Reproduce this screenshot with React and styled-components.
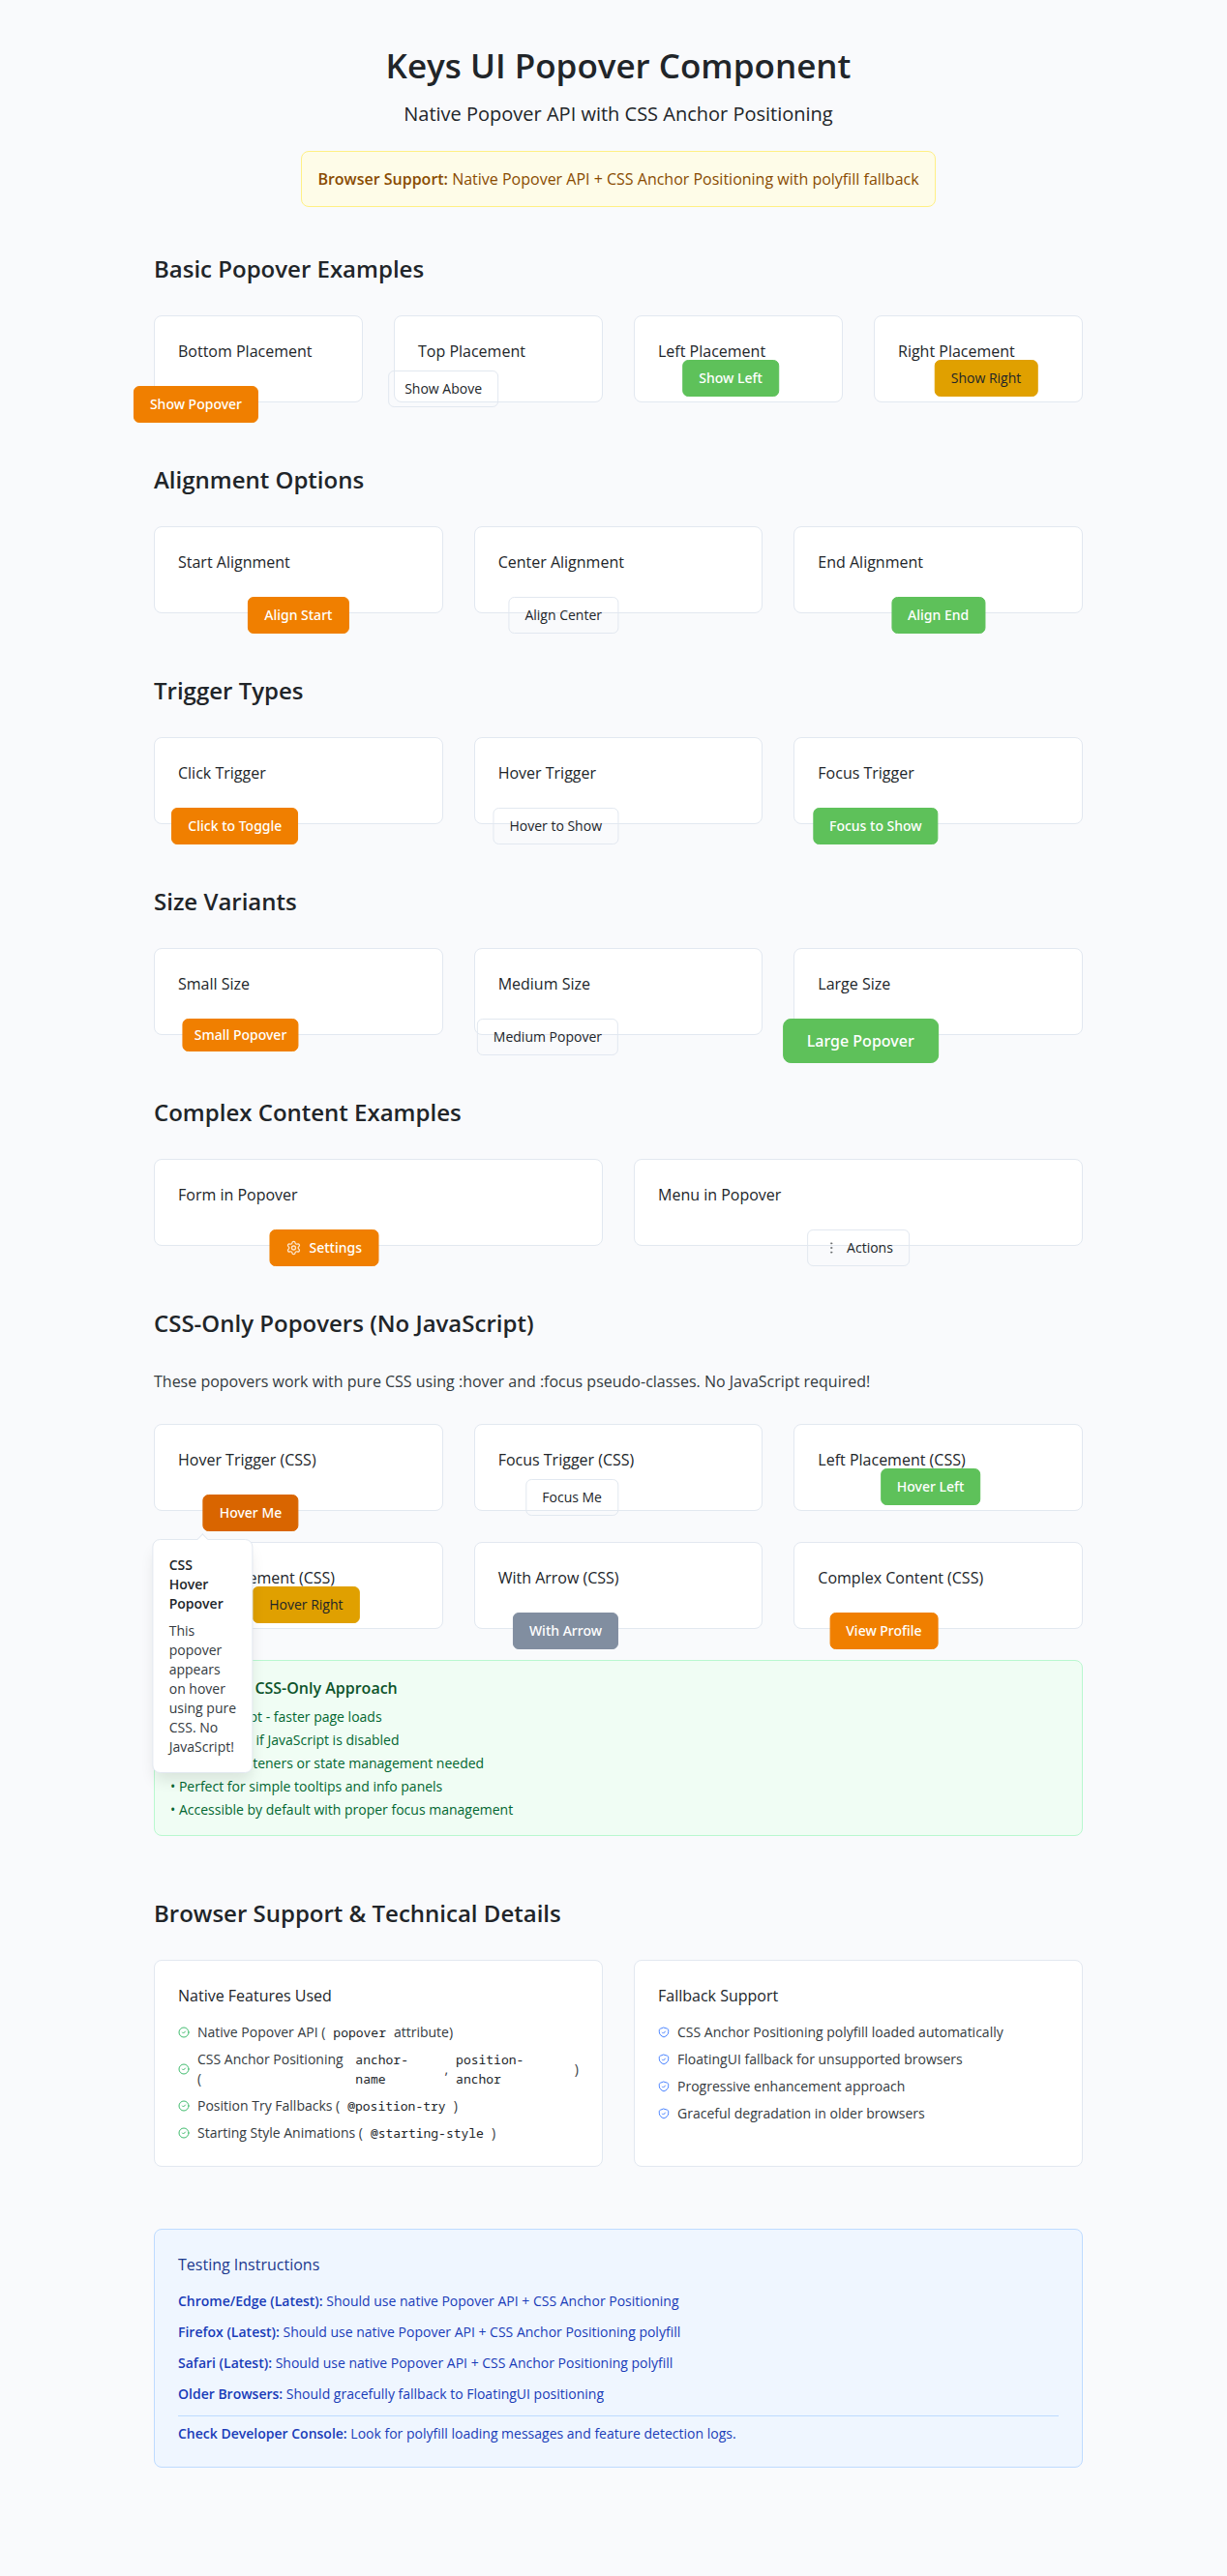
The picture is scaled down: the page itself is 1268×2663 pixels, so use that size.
import React from "react";
import styled, { createGlobalStyle, css } from "styled-components";
import { CircleCheck, EllipsisVertical, Settings } from "lucide-react";

const GlobalStyle = createGlobalStyle`
  *, *::before, *::after {
    box-sizing: border-box;
  }
  body {
    margin: 0;
    background: #f9fafc;
    color: #212529;
    font-family: "Open Sans", "Noto Sans", sans-serif;
    font-size: 16px;
    line-height: 24px;
  }
  h1, h2, h3, h4, p, ul {
    margin: 0;
    padding: 0;
  }
  ul {
    list-style: none;
  }
`;

const Page = styled.div`
  padding: 48px 0 112px 10px;
`;

const Container = styled.main`
  display: flex;
  flex-direction: column;
  width: 100%;
  max-width: 960px;
  margin: 0 auto;
`;

const Header = styled.header`
  display: flex;
  flex-direction: column;
  align-items: center;
  margin-bottom: 48px;
  text-align: center;
`;

const Title = styled.h1`
  font-size: 35px;
  font-weight: 600;
  line-height: 40px;
`;

const Subtitle = styled.p`
  margin-top: 16px;
  font-size: 20px;
  line-height: 28px;
`;

const Notice = styled.div`
  margin-top: 24px;
  padding: 16px;
  border: 1px solid #fff085;
  border-radius: 8px;
  background: #fefce8;
  color: #894b00;
`;

const Section = styled.section`
  display: flex;
  flex-direction: column;
  gap: 32px;
  margin-bottom: 64px;
`;

const SectionTitle = styled.h2`
  font-size: 24px;
  font-weight: 600;
  line-height: 32px;
`;

const Intro = styled.p`
  color: #343a40;
`;

const CardGrid = styled.div`
  display: grid;
  grid-template-columns: repeat(${(p) => p.$columns}, minmax(0, 1fr));
  gap: 32px;
`;

const Card = styled.article`
  position: relative;
  padding: 24px;
  border: 1px solid #e2e8f0;
  border-radius: 8px;
  background: #ffffff;
`;

const CardTitle = styled.h3`
  margin-bottom: 16px;
  font-size: 16px;
  font-weight: 500;
  line-height: 24px;
`;

const anchors = {
  bottom: "translateX(-100%)",
  center: "translateX(-50%)",
  top: "translate(-100%, -16px)",
  left: "translate(calc(-50% - 8px), calc(-50% - 8px))",
  right: "translate(calc(-50% + 8px), calc(-50% - 8px))",
};

const Anchor = styled.div`
  position: absolute;
  z-index: ${(p) => (p.$open ? 10 : 1)};
  top: 72px;
  left: 50%;
  transform: ${(p) => anchors[p.$placement]};
`;

const solid = (background) => css`
  border-color: ${background};
  background: ${background};
  color: #ffffff;
  font-family: "Noto Sans", "Open Sans", sans-serif;
`;

const tones = {
  primary: solid("#f07f00"),
  active: solid("#d96500"),
  success: solid("#5ec15a"),
  neutral: solid("#818ea0"),
  outline: css`
    background: transparent;
  `,
  warning: css`
    border-color: #e0a000;
    background: #e0a000;
  `,
};

const sizes = {
  small: css`
    padding: 6px 11px;
  `,
  medium: css`
    padding: 8px 16px;
  `,
  large: css`
    padding: 10px 24px;
    border-radius: 8px;
    font-size: 16px;
    line-height: 24px;
  `,
};

const Button = styled.button`
  display: flex;
  align-items: center;
  gap: 8px;
  border: 1px solid #e2e8f0;
  border-radius: 6px;
  color: #212529;
  font-family: inherit;
  font-size: 14px;
  font-weight: 500;
  line-height: 20px;
  white-space: nowrap;
  cursor: pointer;
  ${(p) => tones[p.$tone]}
  ${(p) => sizes[p.$size]}

  svg {
    opacity: 0.8;
  }
`;

const Popover = styled.div`
  position: absolute;
  top: 100%;
  left: 0;
  width: 104px;
  margin-top: 8px;
  padding: 16px;
  transform: translateX(-50%);
  border: 1px solid #e2e8f0;
  border-radius: 8px;
  background: #ffffff;
  box-shadow: 0 10px 15px -3px rgba(0, 0, 0, 0.1);
  font-size: 14px;
  line-height: 20px;

  &::before {
    content: "";
    position: absolute;
    top: -5px;
    left: calc(50% - 4px);
    width: 8px;
    height: 8px;
    transform: rotate(45deg);
    border: solid #e2e8f0;
    border-width: 1px 0 0 1px;
    background: #ffffff;
  }
`;

const PopoverTitle = styled.h4`
  margin-bottom: 8px;
  padding-right: 8px;
  font-size: 14px;
  font-weight: 600;
  line-height: 20px;
`;

const PopoverText = styled.p`
  color: #343a40;
`;

const Benefits = styled.div`
  padding: 16px;
  border: 1px solid #b9f8cf;
  border-radius: 8px;
  background: #f0fdf4;
`;

const BenefitsTitle = styled.h3`
  margin-bottom: 8px;
  color: #0d542b;
  font-size: 16px;
  font-weight: 600;
  line-height: 24px;
`;

const BenefitList = styled.ul`
  display: flex;
  flex-direction: column;
  gap: 4px;
  color: #016630;
  font-size: 14px;
  line-height: 20px;
`;

const FeatureList = styled.ul`
  display: flex;
  flex-direction: column;
  gap: 8px;
  color: #343a40;
  font-size: 14px;
  line-height: 20px;
`;

const Feature = styled.li`
  display: flex;
  align-items: center;
  gap: 8px;

  svg {
    flex: none;
    opacity: 0.85;
  }
`;

const Code = styled.code`
  color: #212529;
  font-family: "Noto Sans Mono", "DejaVu Sans Mono", monospace;
  font-size: 13px;
`;

const Instructions = styled.section`
  padding: 24px;
  border: 1px solid #bedbff;
  border-radius: 8px;
  background: #eff6ff;
  color: #193cb8;
  font-size: 14px;
  line-height: 20px;
`;

const InstructionsTitle = styled(CardTitle)`
  color: #1c398e;
`;

const InstructionStack = styled.div`
  display: flex;
  flex-direction: column;
  gap: 12px;
`;

const ConsoleNote = styled.p`
  padding-top: 8px;
  border-top: 1px solid #bedbff;
`;

const Strong = styled.strong`
  font-weight: 600;
`;

const ShieldCheck = () => (
  <svg
    width="12"
    height="12"
    viewBox="0 0 24 24"
    fill="none"
    stroke="#2b6fff"
    strokeWidth="2"
    strokeLinecap="round"
    strokeLinejoin="round"
    aria-hidden="true"
  >
    <path d="M12 2.2l7 2.2c1.6.5 2.4 1.4 2.4 3v3.8c0 4.8-3.8 8.7-9.4 10.6-5.6-1.9-9.4-5.8-9.4-10.6V7.4c0-1.6.8-2.5 2.4-3z" />
    <path d="M9 12.2l2 2 4-4.2" />
  </svg>
);

const Check = () => <CircleCheck size={12} color="#1fb155" strokeWidth={2} aria-hidden="true" />;

const sections = [
  {
    title: "Basic Popover Examples",
    columns: 4,
    cards: [
      { title: "Bottom Placement", label: "Show Popover", tone: "primary", placement: "bottom" },
      { title: "Top Placement", label: "Show Above", tone: "outline", placement: "top" },
      { title: "Left Placement", label: "Show Left", tone: "success", placement: "left" },
      { title: "Right Placement", label: "Show Right", tone: "warning", placement: "right" },
    ],
  },
  {
    title: "Alignment Options",
    columns: 3,
    cards: [
      { title: "Start Alignment", label: "Align Start", tone: "primary", placement: "center" },
      { title: "Center Alignment", label: "Align Center", tone: "outline", placement: "bottom" },
      { title: "End Alignment", label: "Align End", tone: "success", placement: "center" },
    ],
  },
  {
    title: "Trigger Types",
    columns: 3,
    cards: [
      { title: "Click Trigger", label: "Click to Toggle", tone: "primary", placement: "bottom" },
      { title: "Hover Trigger", label: "Hover to Show", tone: "outline", placement: "bottom" },
      { title: "Focus Trigger", label: "Focus to Show", tone: "success", placement: "bottom" },
    ],
  },
  {
    title: "Size Variants",
    columns: 3,
    cards: [
      { title: "Small Size", label: "Small Popover", tone: "primary", size: "small", placement: "bottom" },
      { title: "Medium Size", label: "Medium Popover", tone: "outline", placement: "bottom" },
      { title: "Large Size", label: "Large Popover", tone: "success", size: "large", placement: "bottom" },
    ],
  },
  {
    title: "Complex Content Examples",
    columns: 2,
    cards: [
      {
        title: "Form in Popover",
        label: "Settings",
        tone: "primary",
        placement: "bottom",
        icon: <Settings size={16} strokeWidth={2} aria-hidden="true" />,
      },
      {
        title: "Menu in Popover",
        label: "Actions",
        tone: "outline",
        placement: "center",
        icon: <EllipsisVertical size={16} strokeWidth={1} aria-hidden="true" />,
      },
    ],
  },
];

const cssCards = [
  {
    title: "Hover Trigger (CSS)",
    label: "Hover Me",
    tone: "active",
    placement: "bottom",
    popover: {
      title: "CSS Hover Popover",
      text: "This popover appears on hover using pure CSS. No JavaScript!",
    },
  },
  { title: "Focus Trigger (CSS)", label: "Focus Me", tone: "outline", placement: "top" },
  { title: "Left Placement (CSS)", label: "Hover Left", tone: "success", placement: "left" },
  { title: "Right Placement (CSS)", label: "Hover Right", tone: "warning", placement: "right" },
  { title: "With Arrow (CSS)", label: "With Arrow", tone: "neutral", placement: "bottom" },
  { title: "Complex Content (CSS)", label: "View Profile", tone: "primary", placement: "bottom" },
];

const benefits = [
  "No JavaScript - faster page loads",
  "Works even if JavaScript is disabled",
  "No event listeners or state management needed",
  "Perfect for simple tooltips and info panels",
  "Accessible by default with proper focus management",
];

const fallbacks = [
  "CSS Anchor Positioning polyfill loaded automatically",
  "FloatingUI fallback for unsupported browsers",
  "Progressive enhancement approach",
  "Graceful degradation in older browsers",
];

const browsers = [
  ["Chrome/Edge (Latest):", "Should use native Popover API + CSS Anchor Positioning"],
  ["Firefox (Latest):", "Should use native Popover API + CSS Anchor Positioning polyfill"],
  ["Safari (Latest):", "Should use native Popover API + CSS Anchor Positioning polyfill"],
  ["Older Browsers:", "Should gracefully fallback to FloatingUI positioning"],
];

const ExampleCard = ({ title, label, tone, size = "medium", placement, icon, popover }) => (
  <Card>
    <CardTitle>{title}</CardTitle>
    <Anchor $placement={placement} $open={Boolean(popover)}>
      <Button type="button" $tone={tone} $size={size}>
        {icon}
        {label}
      </Button>
      {popover && (
        <Popover role="tooltip">
          <PopoverTitle>{popover.title}</PopoverTitle>
          <PopoverText>{popover.text}</PopoverText>
        </Popover>
      )}
    </Anchor>
  </Card>
);

const ExampleGrid = ({ columns, cards }) => (
  <CardGrid $columns={columns}>
    {cards.map((card) => (
      <ExampleCard key={card.title} {...card} />
    ))}
  </CardGrid>
);

export default function App() {
  return (
    <Page>
      <GlobalStyle />
      <Container>
        <Header>
          <Title>Keys UI Popover Component</Title>
          <Subtitle>Native Popover API with CSS Anchor Positioning</Subtitle>
          <Notice>
            <Strong>Browser Support:</Strong> Native Popover API + CSS Anchor Positioning with polyfill fallback
          </Notice>
        </Header>

        {sections.map((section) => (
          <Section key={section.title}>
            <SectionTitle>{section.title}</SectionTitle>
            <ExampleGrid columns={section.columns} cards={section.cards} />
          </Section>
        ))}

        <Section>
          <SectionTitle>CSS-Only Popovers (No JavaScript)</SectionTitle>
          <Intro>
            These popovers work with pure CSS using :hover and :focus pseudo-classes. No JavaScript required!
          </Intro>
          <ExampleGrid columns={3} cards={cssCards} />
          <Benefits>
            <BenefitsTitle>Benefits of CSS-Only Approach</BenefitsTitle>
            <BenefitList>
              {benefits.map((text) => (
                <li key={text}>• {text}</li>
              ))}
            </BenefitList>
          </Benefits>
        </Section>

        <Section>
          <SectionTitle>Browser Support &amp; Technical Details</SectionTitle>
          <CardGrid $columns={2}>
            <Card>
              <CardTitle>Native Features Used</CardTitle>
              <FeatureList>
                <Feature>
                  <Check />
                  Native Popover API (<Code>popover</Code> attribute)
                </Feature>
                <Feature>
                  <Check />
                  CSS Anchor Positioning (<Code>anchor-name</Code>, <Code>position-anchor</Code>)
                </Feature>
                <Feature>
                  <Check />
                  Position Try Fallbacks (<Code>@position-try</Code>)
                </Feature>
                <Feature>
                  <Check />
                  Starting Style Animations (<Code>@starting-style</Code>)
                </Feature>
              </FeatureList>
            </Card>
            <Card>
              <CardTitle>Fallback Support</CardTitle>
              <FeatureList>
                {fallbacks.map((text) => (
                  <Feature key={text}>
                    <ShieldCheck />
                    {text}
                  </Feature>
                ))}
              </FeatureList>
            </Card>
          </CardGrid>
        </Section>

        <Instructions>
          <InstructionsTitle>Testing Instructions</InstructionsTitle>
          <InstructionStack>
            {browsers.map(([name, text]) => (
              <p key={name}>
                <Strong>{name}</Strong> {text}
              </p>
            ))}
            <ConsoleNote>
              <Strong>Check Developer Console:</Strong> Look for polyfill loading messages and feature detection logs.
            </ConsoleNote>
          </InstructionStack>
        </Instructions>
      </Container>
    </Page>
  );
}
